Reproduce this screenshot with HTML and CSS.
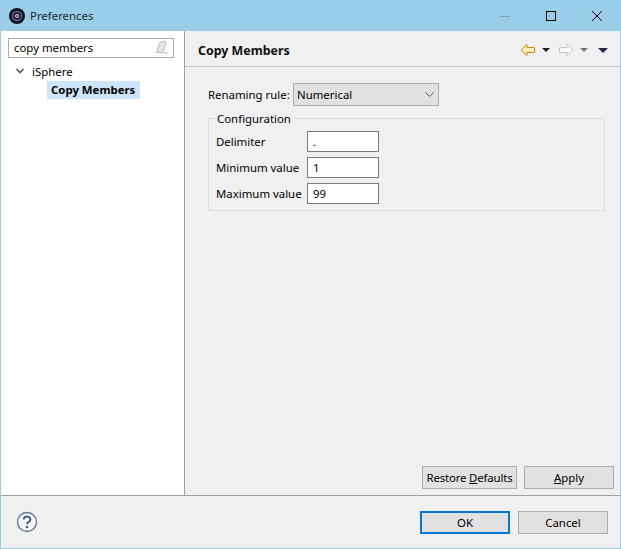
FILE: index.html
```html
<!DOCTYPE html>
<html lang="en">
<head>
  <meta charset="UTF-8">
  <title>Preferences</title>
  <link rel="stylesheet" href="styles.css">
</head>
<body>
  <div class="window">
    <div class="titlebar">
      <svg class="app-icon" width="16" height="16" viewBox="0 0 16 16">
        <circle cx="8" cy="8" r="8" fill="#14121c"/>
        <circle cx="8" cy="8" r="4.5" fill="none" stroke="#6a62b0" stroke-width="1.5"/>
        <circle cx="8" cy="8" r="2" fill="#e8e8f0"/>
        <circle cx="8" cy="8" r="0.9" fill="#14121c"/>
      </svg>
      <span class="title">Preferences</span>
      <div class="win-controls">
        <svg width="46" height="30" viewBox="0 0 46 30"><path d="M18 15.5h10" stroke="#7fa3b8" fill="none"/></svg>
        <svg width="46" height="30" viewBox="0 0 46 30"><rect x="18.5" y="10.5" width="9" height="9" stroke="#000" fill="none"/></svg>
        <svg width="46" height="30" viewBox="0 0 46 30"><path d="M18 10l10 10M28 10l-10 10" stroke="#000" fill="none"/></svg>
      </div>
    </div>

    <div class="main">
      <div class="sidebar">
        <div class="filter">
          <span>copy members</span>
          <svg width="16" height="14" viewBox="0 0 16 14">
            <path d="M1.5 12.5L5 2.5 9.5 1l1.5 1-3 10.500z" fill="#e6e6e6" stroke="#b9b9b9"/>
            <path d="M9 13h4" stroke="#b9b9b9"/>
          </svg>
        </div>
        <div class="tree-row">
          <svg class="twistie" width="10" height="8" viewBox="0 0 10 8"><path d="M1.500 2l3.500 3.500L8.500 2" fill="none" stroke="#555" stroke-width="1.600"/></svg>
          <span>iSphere</span>
        </div>
        <div class="tree-child"><span class="selected">Copy Members</span></div>
      </div>

      <div class="content">
        <div class="page-head">
          <h1>Copy Members</h1>
          <div class="nav-icons">
            <svg width="16" height="14" viewBox="0 0 16 14"><path d="M1 7l6-5.500V4.500h7.500v5H7v3z" fill="#fdeeb8" stroke="#c98a1c" stroke-linejoin="round"/></svg>
            <svg class="drop" width="8" height="4" viewBox="0 0 8 4"><path d="M0 0h8L4 4z" fill="#222"/></svg>
            <svg class="nav-next" width="16" height="14" viewBox="0 0 16 14"><path d="M15 7L9 1.500V4.500H1.500v5H9v3z" fill="#fafafa" stroke="#c4c4c4" stroke-linejoin="round"/></svg>
            <svg class="drop" width="8" height="4" viewBox="0 0 8 4"><path d="M0 0h8L4 4z" fill="#777"/></svg>
            <svg class="drop-menu" width="10" height="5" viewBox="0 0 10 5"><path d="M0 0h10L5 5z" fill="#2b2350"/></svg>
          </div>
        </div>

        <div class="page-body">
          <div class="rule-row">
            <label>Renaming rule:</label>
            <div class="combo">
              <span>Numerical</span>
              <svg width="9" height="5" viewBox="0 0 9 5"><path d="M0.500 0.500L4.500 4.500l4-4" fill="none" stroke="#555"/></svg>
            </div>
          </div>

          <fieldset class="config">
            <legend>Configuration</legend>
            <div class="field"><label>Delimiter</label><div class="input">.</div></div>
            <div class="field"><label>Minimum value</label><div class="input">1</div></div>
            <div class="field"><label>Maximum value</label><div class="input">99</div></div>
          </fieldset>

          <div class="page-buttons">
            <button class="btn btn-restore">Restore <u>D</u>efaults</button>
            <button class="btn btn-apply"><u>A</u>pply</button>
          </div>
        </div>
      </div>
    </div>

    <div class="footer">
      <svg width="22" height="22" viewBox="0 0 22 22">
        <circle cx="11" cy="11" r="9.500" fill="#f7f7f9" stroke="#5f7596" stroke-width="1.300"/>
        <path d="M7.800 8.500c0-4 6.600-4 6.600 0 0 2.500-3.300 2.300-3.300 4.700" fill="none" stroke="#475f85" stroke-width="2"/>
        <circle cx="11" cy="16" r="1.300" fill="#475f85"/>
      </svg>
      <div class="footer-buttons">
        <button class="btn btn-ok">OK</button>
        <button class="btn btn-cancel">Cancel</button>
      </div>
    </div>
  </div>
</body>
</html>
```

FILE: styles.css
```css
* { box-sizing: border-box; }
html, body { margin: 0; height: 100%; }
body { font-family: "Noto Sans", "Open Sans", sans-serif; font-size: 11.4px; color: #000; background: #f0f0f0; }
label { display: block; }

.window { width: 621px; height: 549px; border: 1px solid #99cde8; border-top: none; display: flex; flex-direction: column; }

.titlebar { height: 31px; margin: 0 -1px; background: #99cde8; display: flex; align-items: center; padding-left: 9px; flex: none; }
.app-icon { margin-right: 5px; }
.title { color: #1a2a33; }
.win-controls { margin-left: auto; padding-right: 1px; display: flex; }
.win-controls svg { display: block; }

.main { flex: 1; display: flex; border-bottom: 1px solid #a0a0a0; min-height: 0; }

.sidebar { width: 184px; background: #fff; border-right: 1px solid #a0a0a0; padding: 7px 0 0 7px; flex: none; }
.filter { width: 166px; height: 20px; border: 1px solid #acacac; display: flex; align-items: center; justify-content: space-between; padding: 0 2px 2px 5px; }
.tree-row { display: flex; align-items: center; height: 18px; margin-top: 4px; padding-left: 7px; }
.twistie { margin-right: 7px; }
.tree-child { padding: 1px 0 0 39px; height: 18px; }
.selected { display: inline-block; background: #cce5fb; font-weight: 700; padding: 0 5px 0 4px; line-height: 18px; }

.content { flex: 1; display: flex; flex-direction: column; min-width: 0; }
.page-head { height: 36px; border-bottom: 1px solid #c6c6c6; display: flex; align-items: center; padding: 3px 12px 0 13px; flex: none; }
h1 { margin: 0; font-size: 12.4px; font-weight: 700; color: #111; }
.nav-icons { margin-left: auto; display: flex; align-items: center; }
.drop { margin-left: 6px; }
.nav-next { margin-left: 8px; }
.drop-menu { margin-left: 10px; }

.page-body { flex: 1; display: flex; flex-direction: column; padding: 16px 6px 6px 23px; }
.rule-row { display: flex; align-items: center; }
.rule-row label { width: 85px; }
.combo { width: 146px; height: 23px; background: #e1e1e1; border: 1px solid #adadad; display: flex; align-items: center; justify-content: space-between; padding: 0 4px 0 3px; }

.config { margin: 5px 0 0; padding: 4px 0 2px 7px; width: 397px; border: 1px solid #dcdcdc; min-width: 0; }
.config legend { padding: 0 2px; margin-left: -1px; line-height: 15px; }
.field { display: flex; align-items: center; height: 22px; margin-bottom: 4px; }
.field label { width: 91px; }
.input { width: 72px; height: 21px; background: #fff; border: 1px solid #7a7a7a; padding-left: 5px; line-height: 19px; }

.page-buttons { margin-top: auto; display: flex; justify-content: flex-end; gap: 7px; }
.btn { height: 23px; background: #e1e1e1; border: 1px solid #adadad; font: inherit; color: #000; padding: 0; white-space: nowrap; }
.btn-restore { width: 95px; letter-spacing: -0.15px; }
.btn-apply { width: 90px; }

.footer { height: 52px; display: flex; align-items: center; padding: 0 12px 0 15px; flex: none; }
.footer-buttons { margin-left: auto; display: flex; gap: 8px; }
.btn-ok { width: 90px; border: 2px solid #0078d7; }
.btn-cancel { width: 90px; }
```
